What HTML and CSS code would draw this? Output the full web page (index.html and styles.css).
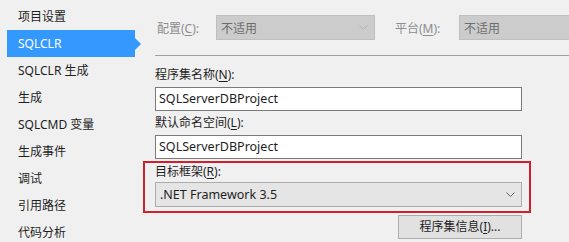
FILE: index.html
```html
<!DOCTYPE html>
<html lang="zh-CN">
<head>
    <meta charset="UTF-8">
    <title>SQLCLR</title>
    <link rel="stylesheet" href="styles.css">
</head>
<body>
    <div class="nav">
        <div class="nav-item">项目设置</div>
        <div class="nav-item selected">SQLCLR</div>
        <div class="nav-item">SQLCLR 生成</div>
        <div class="nav-item">生成</div>
        <div class="nav-item">SQLCMD 变量</div>
        <div class="nav-item">生成事件</div>
        <div class="nav-item">调试</div>
        <div class="nav-item">引用路径</div>
        <div class="nav-item">代码分析</div>
    </div>

    <div class="main">
        <div class="top-row">
            <span class="top-label config-label">配置(<u>C</u>):</span>
            <div class="combo disabled config-combo">
                <span>不适用</span>
                <svg class="chevron" width="9" height="5" viewBox="0 0 9 5"><path d="M0.5 0.5 L4.5 4.5 L8.5 0.5" fill="none" stroke="#b4b4b4" stroke-width="1"/></svg>
            </div>
            <span class="top-label platform-label">平台(<u>M</u>):</span>
            <div class="combo disabled platform-combo">
                <span>不适用</span>
            </div>
        </div>
        <div class="separator"></div>

        <div class="field">
            <div class="field-label first">程序集名称(<u>N</u>):</div>
            <div class="textbox">SQLServerDBProject</div>
            <div class="field-label">默认命名空间(<u>L</u>):</div>
            <div class="textbox">SQLServerDBProject</div>
        </div>

        <div class="highlight">
            <div class="field-label framework-label">目标框架(<u>R</u>):</div>
            <div class="combo framework-combo">
                <span>.NET Framework 3.5</span>
                <svg class="chevron" width="9" height="5" viewBox="0 0 9 5"><path d="M0.5 0.5 L4.5 4.5 L8.5 0.5" fill="none" stroke="#606060" stroke-width="1"/></svg>
            </div>
        </div>

        <div class="button-row">
            <div class="button">程序集信息(<u>I</u>)...</div>
        </div>
    </div>
</body>
</html>
```

FILE: styles.css
```css
body {
    margin: 0;
    padding: 0;
    width: 569px;
    height: 242px;
    overflow: hidden;
    display: flex;
    background-color: #f0f0f0;
    font-family: "Noto Sans", "Noto Sans CJK SC", sans-serif;
    font-size: 12px;
    color: #1e1e1e;
}

u {
    text-decoration: underline;
    text-underline-offset: 2px;
}

/* menu a sinistra */
.nav {
    width: 143px;
    flex-shrink: 0;
    padding-top: 3px;
}

.nav-item {
    position: relative;
    height: 27px;
    line-height: 27px;
    margin-left: 7px;
    width: 128px;
    padding-left: 11px;
    box-sizing: border-box;
    white-space: nowrap;
}

.nav-item.selected {
    background-color: #3399ff;
    color: #fff;
}

.nav-item.selected::after {
    content: "";
    position: absolute;
    right: -6px;
    top: 8px;
    border-left: 6px solid #3399ff;
    border-top: 6px solid transparent;
    border-bottom: 6px solid transparent;
}

.main {
    flex: 1;
    min-width: 0;
}

.top-row {
    display: flex;
    align-items: center;
    margin-top: 15px;
    padding-left: 14px;
    height: 25px;
    white-space: nowrap;
}

.top-label {
    color: #8d8d8d;
    flex-shrink: 0;
}

.config-label {
    width: 59px;
}

.platform-label {
    margin-left: 20px;
    width: 64px;
}

.combo {
    height: 25px;
    box-sizing: border-box;
    display: flex;
    align-items: center;
    justify-content: space-between;
    padding: 0 6px 0 4px;
    flex-shrink: 0;
}

.combo.disabled {
    background-color: #cccccc;
    border: 1px solid #bfbfbf;
    color: #6d6d6d;
}

.config-combo {
    width: 159px;
}

/* tagliata dal bordo destro */
.platform-combo {
    flex: 1;
    min-width: 0;
    border-right: none !important;
}

.separator {
    height: 1px;
    background-color: #a0a0a0;
    margin: 15px 0 0 12px;
}

.field {
    margin-left: 12px;
    width: 367px;
}

.field-label {
    line-height: 20px;
    margin-top: 2px;
    white-space: nowrap;
}

.field-label.first {
    margin-top: 9px;
}

.textbox {
    height: 24px;
    line-height: 22px;
    box-sizing: border-box;
    border: 1px solid #7a7a7a;
    background-color: #fff;
    padding-left: 3px;
    margin-top: 2px;
    font-size: 12.5px;
}

.highlight {
    margin-top: 2px;
    width: 388px;
    box-sizing: border-box;
    border: 2px solid #d0202c;
    padding: 0 7px 4px 10px;
}

.framework-label {
    line-height: 18px;
    margin-top: 0;
}

.framework-combo {
    margin-top: 1px;
    width: 367px;
    background-color: #e5e5e5;
    border: 1px solid #acacac;
    font-size: 12.5px;
}

.chevron {
    display: block;
}

.button-row {
    margin-left: 12px;
    width: 367px;
    display: flex;
    justify-content: flex-end;
}

.button {
    margin-top: 2px;
    width: 124px;
    height: 24px;
    line-height: 22px;
    box-sizing: border-box;
    background-color: #e1e1e1;
    border: 1px solid #adadad;
    text-align: center;
}
```
